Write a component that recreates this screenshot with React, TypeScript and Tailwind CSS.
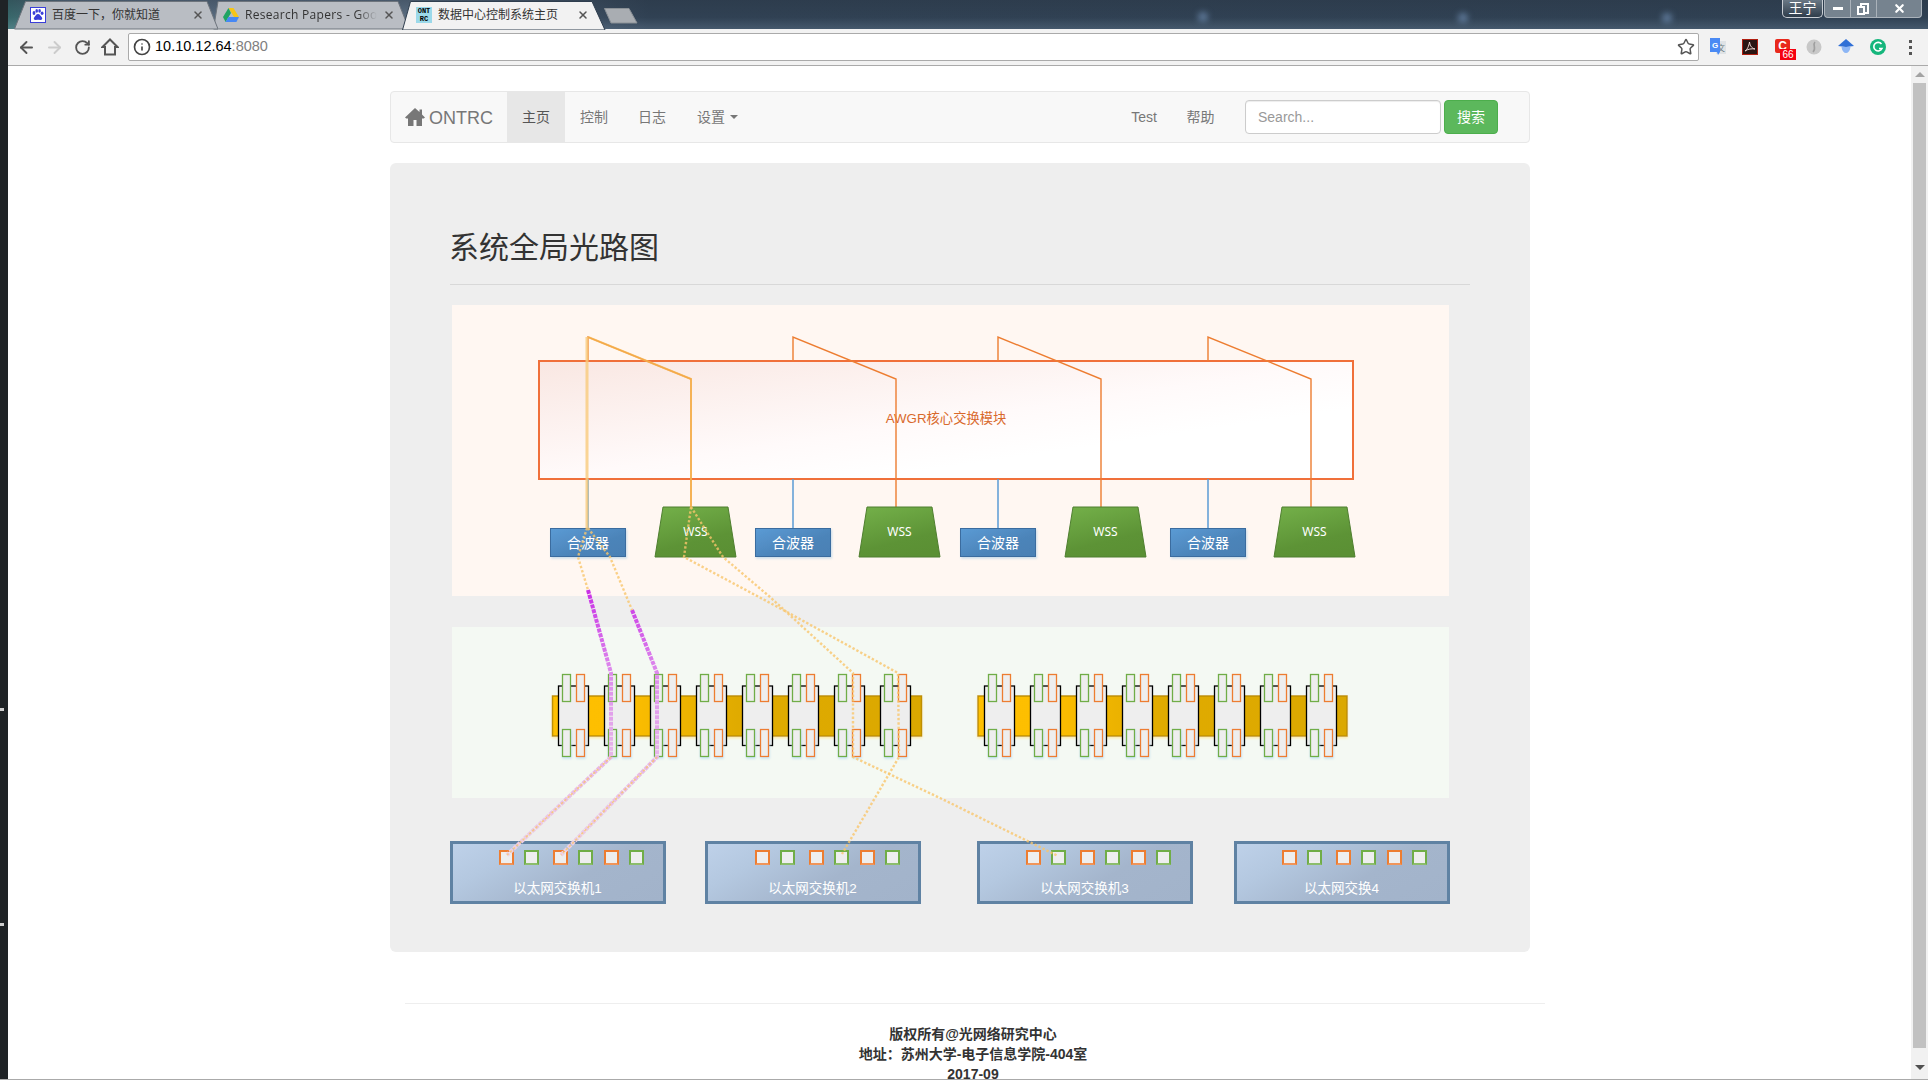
import React from "react";
import { ArrowLeft, ArrowRight, RotateCw, Info, Star, X } from "lucide-react";

const groups = [
  { c: 550, w: 655, top: 588, right: 691 },
  { c: 755, w: 859, top: 793, right: 896 },
  { c: 960, w: 1065, top: 998, right: 1101 },
  { c: 1170, w: 1274, top: 1208, right: 1311 },
];

function Tab({ w, points, fill, stroke, className, children }: { w: number; points: string; fill: string; stroke: string; className: string; children: React.ReactNode }) {
  return (
    <div className={`relative h-[28px] shrink-0 flex items-center ${className}`}>
      <svg className="absolute left-0 top-0" width={w} height={29}>
        <polygon points={points} fill={fill} stroke={stroke} strokeWidth="1" />
      </svg>
      {children}
    </div>
  );
}

function BaiduIcon() {
  return (
    <svg width="16" height="16" viewBox="0 0 16 16" className="shrink-0">
      <rect x="0.5" y="0.5" width="15" height="15" fill="#fff" stroke="#3a3fd8" />
      <g fill="#3a3fd8">
        <ellipse cx="4" cy="6" rx="1.4" ry="1.9" />
        <ellipse cx="6.7" cy="3.9" rx="1.3" ry="1.8" />
        <ellipse cx="9.6" cy="3.9" rx="1.3" ry="1.8" />
        <ellipse cx="12.1" cy="6.2" rx="1.4" ry="1.8" />
        <path d="M8 7 C6 7 5.6 9 4.5 10 C3 11.5 4 13.4 6 13 C7.3 12.8 8.8 12.8 10 13 C12 13.4 13 11.5 11.6 10 C10.4 9 10 7 8 7Z" />
      </g>
    </svg>
  );
}

function DriveIcon() {
  return (
    <svg width="16" height="16" viewBox="0 0 16 16" className="shrink-0">
      <polygon points="5.5,1 10.5,1 16,10 11,10" fill="#f5c518" />
      <polygon points="5.5,1 0,10 2.6,15 8,6" fill="#1fa463" />
      <polygon points="2.6,15 13.4,15 16,10 5.4,10" fill="#4688f4" />
    </svg>
  );
}

function OntIcon() {
  return (
    <div className="w-[16px] h-[16px] shrink-0 bg-[#9bd9ea] flex flex-col items-center justify-center text-black [font-family:'Liberation_Mono',monospace] text-[7px] leading-[8px] font-bold">
      <span>ONT</span>
      <span>RC</span>
    </div>
  );
}

function Port({ color, className }: { color: "o" | "g"; className?: string }) {
  return (
    <div className={`w-[15px] h-[15px] bg-[#eeeeee] border-2 ${color === "o" ? "border-[#ed7d31] border-b-[#f0955a]" : "border-[#70ad47] border-b-[#8cbd6c]"} ${className ?? ""}`} />
  );
}

function Switch({ label, className, pad }: { label: string; className: string; pad: string }) {
  return (
    <div className={`w-[216px] h-[63px] shrink-0 border-[3px] border-[#5f82a3] bg-[linear-gradient(150deg,#bed1e9_0%,#b4c8e0_25%,#a4b5cc_60%,#a2b3ca_100%)] flex flex-col ${className}`}>
      <div className={`flex pt-[6px] ${pad}`}>
        <Port color="o" />
        <Port color="g" className="ml-[10px]" />
        <Port color="o" className="ml-[14px]" />
        <Port color="g" className="ml-[10px]" />
        <Port color="o" className="ml-[11px]" />
        <Port color="g" className="ml-[10px]" />
      </div>
      <div className="mt-[14px] text-center text-white text-[13.5px] leading-[20px] pr-[1px]">{label}</div>
    </div>
  );
}

function PeachDrawing() {
  return (
    <svg width="997" height="291" viewBox="452 305 997 291" className="block">
      <defs>
        <linearGradient id="awgr" x1="0" y1="0" x2="1" y2="1">
          <stop offset="0" stopColor="#f9e7e2" />
          <stop offset="0.5" stopColor="#fffafa" />
          <stop offset="0.7" stopColor="#ffffff" />
        </linearGradient>
        <linearGradient id="comb" x1="0" y1="0" x2="1" y2="1">
          <stop offset="0" stopColor="#5b9bd5" />
          <stop offset="0.6" stopColor="#4c84b9" />
          <stop offset="1" stopColor="#4a80b4" />
        </linearGradient>
        <linearGradient id="wss" x1="0.2" y1="0" x2="0.6" y2="1">
          <stop offset="0" stopColor="#72ae48" />
          <stop offset="0.7" stopColor="#5d9336" />
          <stop offset="1" stopColor="#5b9034" />
        </linearGradient>
        <filter id="soft" x="-10%" y="-10%" width="120%" height="130%">
          <feDropShadow dx="1" dy="1.5" stdDeviation="1.2" floodColor="#b9d3e6" floodOpacity="0.8" />
        </filter>
      </defs>
      <rect x="539" y="361" width="814" height="118" fill="url(#awgr)" stroke="#f0703a" strokeWidth="2" />
      <text x="946" y="423" textAnchor="middle" fontSize="13.3" fill="#d9692c">AWGR核心交换模块</text>
      {groups.map((g) => (
        <g key={g.c}>
          <line x1={g.top} y1="479" x2={g.top} y2="528" stroke="#5b9bd5" strokeWidth="1.5" />
          <path d={`M${g.top} 361 V337 L${g.right} 379 V507`} fill="none" stroke="#ed7d31" strokeWidth="1.4" />
          <rect x={g.c + 0.5} y="528.5" width="75" height="28" fill="url(#comb)" stroke="#3b6c9f" strokeWidth="1" filter="url(#soft)" />
          <text x={g.c + 38} y="548" textAnchor="middle" fontSize="14" fill="#ffffff">合波器</text>
          <polygon points={`${g.w},557 ${g.w + 8},507 ${g.w + 73},507 ${g.w + 81},557`} fill="url(#wss)" stroke="#4f7f30" strokeWidth="1" />
          <text x={g.w + 40.5} y="536" textAnchor="middle" fontSize="12" fill="#ffffff" className="[font-family:'Noto_Sans',sans-serif]">WSS</text>
        </g>
      ))}
    </svg>
  );
}

function Bank({ barX, barW, modX, gradId }: { barX: number; barW: number; modX: number; gradId: string }) {
  const mods = [0, 1, 2, 3, 4, 5, 6, 7];
  return (
    <g>
      <rect x={barX} y="696" width={barW} height="40" fill={`url(#${gradId})`} stroke="#bf9000" strokeWidth="1.5" filter="url(#glow)" />
      {mods.map((i) => {
        const x = modX + i * 46;
        return (
          <g key={i}>
            <rect x={x} y="686" width="30" height="59.5" fill="#eeeeee" stroke="#000000" strokeWidth="1.3" />
            <rect x={x + 4} y="674.5" width="8" height="27" fill="#eeeeee" stroke="#70ad47" strokeWidth="1.3" />
            <rect x={x + 18} y="674.5" width="8" height="27" fill="#eeeeee" stroke="#ed7d31" strokeWidth="1.3" />
            <rect x={x + 4} y="729.5" width="8" height="27" fill="#eeeeee" stroke="#70ad47" strokeWidth="1.3" filter="url(#blue)" />
            <rect x={x + 18} y="729.5" width="8" height="27" fill="#eeeeee" stroke="#ed7d31" strokeWidth="1.3" filter="url(#blue)" />
          </g>
        );
      })}
    </g>
  );
}

function GreenDrawing() {
  return (
    <svg width="997" height="171" viewBox="452 627 997 171" className="block">
      <defs>
        <linearGradient id="bar1" x1="0" y1="0" x2="1" y2="0">
          <stop offset="0" stopColor="#ffc000" />
          <stop offset="0.2" stopColor="#fdbe00" />
          <stop offset="0.5" stopColor="#e0ab00" />
          <stop offset="1" stopColor="#dba800" />
        </linearGradient>
        <filter id="glow" x="-2%" y="-10%" width="104%" height="130%">
          <feDropShadow dx="0" dy="1.5" stdDeviation="1.2" floodColor="#ffe9a0" floodOpacity="0.9" />
        </filter>
        <filter id="blue" x="-40%" y="-10%" width="180%" height="125%">
          <feDropShadow dx="0.5" dy="1.5" stdDeviation="1" floodColor="#bcdff0" floodOpacity="0.9" />
        </filter>
      </defs>
      <Bank barX={552.5} barW={369} modX={558.5} gradId="bar1" />
      <Bank barX={978} barW={369} modX={984.5} gradId="bar1" />
    </svg>
  );
}

function Fibres() {
  const dots = { fill: "none", stroke: "#f9c66c", strokeWidth: 2.4, strokeDasharray: "2.4 2", strokeOpacity: 0.8 };
  return (
    <svg width="1000" height="600" viewBox="450 305 1000 600" className="absolute left-0 top-0 pointer-events-none">
      <defs>
        <linearGradient id="mag" gradientUnits="userSpaceOnUse" x1="0" y1="590" x2="0" y2="860">
          <stop offset="0" stopColor="#c92fe6" />
          <stop offset="0.3" stopColor="#dd8aec" />
          <stop offset="0.6" stopColor="#e6b4ea" />
          <stop offset="1" stopColor="#eed2e4" />
        </linearGradient>
      </defs>
      <path d="M587 337 V528" fill="none" stroke="#f9cb7c" strokeWidth="3" strokeOpacity="0.8" />
      <path d="M588 337 L691 379 V507" fill="none" stroke="#f6b850" strokeWidth="2" strokeOpacity="0.75" />
      <path d="M588 590 L611 673 V757 L507 855" fill="none" stroke="url(#mag)" strokeWidth="4" strokeDasharray="4 1" />
      <path d="M632 610 L657 673 V757 L561 855" fill="none" stroke="url(#mag)" strokeWidth="4" strokeDasharray="4 1" />
      <path d="M587 528 L578 557 L588 590" {...dots} />
      <path d="M588 528 L610 557 L632 610" {...dots} />
      <path d="M611 757 L507 855" {...dots} strokeWidth={1.6} />
      <path d="M657 757 L561 855" {...dots} strokeWidth={1.6} />
      <path d="M691 507 L684 557 L787 612 L898 673 L899 757 L862 820 L842 854" {...dots} />
      <path d="M691 507 L723 557 L770 597 L853 673 L853 757 L940 798 L1058 856" {...dots} />
    </svg>
  );
}

function ExtensionIcons() {
  return (
    <div className="flex items-center ml-[3px]">
      <div className="w-[32px] flex justify-center">
        <svg width="16" height="18" viewBox="0 0 16 18">
          <rect x="6" y="3" width="10" height="13" fill="#dfe3e6" />
          <text x="11" y="13" textAnchor="middle" fontSize="8" fill="#6b7a80">文</text>
          <polygon points="0,0 10,0 10,14 8,17 7,14 0,14" fill="#4a8af4" />
          <text x="5" y="10" textAnchor="middle" fontSize="8" fontWeight="700" fill="#ffffff">G</text>
        </svg>
      </div>
      <div className="w-[32px] flex justify-center">
        <svg width="16" height="16" viewBox="0 0 16 16">
          <rect x="0.5" y="0.5" width="15" height="15" fill="#2a1512" stroke="#b01e10" />
          <path d="M3 12 C5 11 7 7 7.5 3 C8 6 9 9 13 10 C9.5 9.5 6 10 3 12Z" fill="none" stroke="#f0d9d5" strokeWidth="1" />
        </svg>
      </div>
      <div className="w-[32px] flex justify-center">
        <div className="relative w-[16px] h-[16px] ml-[2px]">
          <div className="w-[15px] h-[14px] rounded-[2px] bg-[#e8291c] flex items-center justify-center text-white text-[12px] leading-none font-bold">C</div>
          <div className="absolute left-[5px] top-[10px] w-[16px] h-[11px] bg-[#f5000f] text-white text-[10px] leading-[11px] text-center">66</div>
        </div>
      </div>
      <div className="w-[32px] flex justify-center">
        <svg width="16" height="16" viewBox="0 0 16 16">
          <circle cx="8" cy="8" r="7.5" fill="#c8c8c8" />
          <path d="M9 3 C6 6 11 9 7 13" fill="none" stroke="#9f9f9f" strokeWidth="1.6" />
        </svg>
      </div>
      <div className="w-[32px] flex justify-center">
        <svg width="16" height="16" viewBox="0 0 16 16">
          <polygon points="8,0 16,7 8,8 0,7" fill="#2f6fd6" />
          <path d="M3.5 8 H12.5 C12 12 10 14 8 14 C6 14 4 12 3.5 8Z" fill="#8db6f5" />
        </svg>
      </div>
      <div className="w-[32px] flex justify-center">
        <svg width="16" height="16" viewBox="0 0 16 16">
          <circle cx="8" cy="8" r="8" fill="#15b67c" />
          <path d="M11.5 5 A4.3 4.3 0 1 0 12 9.5 H9" fill="none" stroke="#ffffff" strokeWidth="1.6" />
        </svg>
      </div>
      <div className="w-[32px] flex flex-col items-center gap-[3px]">
        <span className="w-[3px] h-[3px] bg-[#555]" />
        <span className="w-[3px] h-[3px] bg-[#555]" />
        <span className="w-[3px] h-[3px] bg-[#555]" />
      </div>
    </div>
  );
}

function TitleBar() {
  return (
    <div className="relative h-[29px] flex pt-px bg-[linear-gradient(90deg,#3f7e7c_0px,#6b8197_60px,#6f859b_400px,#34475b_640px,#33465a_100%)]">
      <div className="absolute inset-0 bg-[linear-gradient(180deg,rgba(40,52,66,0.55)_0%,rgba(40,52,66,0.3)_60%,rgba(110,130,150,0.3)_100%)]" />
      <span className="absolute left-[1190px] top-[12px] w-[10px] h-[10px] rounded-full bg-[#5f7a9a] blur-[3px]" />
      <span className="absolute left-[1450px] top-[13px] w-[10px] h-[10px] rounded-full bg-[#5f7a9a] blur-[3px]" />
      <span className="absolute left-[1654px] top-[13px] w-[10px] h-[10px] rounded-full bg-[#5f7a9a] blur-[3px]" />
      <div className="relative flex text-[12px] text-[#333] ml-[6px]">
        <Tab w={204} points="0.5,28 11.5,0.5 193,0.5 204,28" fill="#b9bdc3" stroke="#6d747c" className="w-[204px] z-10">
          <div className="relative flex items-center pl-[16px]">
            <BaiduIcon />
            <span className="ml-[6px] w-[140px]">百度一下，你就知道</span>
            <X size={12} strokeWidth={3} className="text-[#555]" />
          </div>
        </Tab>
        <Tab w={196} points="0.5,28 5,0.5 185,0.5 196,28" fill="#b9bdc3" stroke="#6d747c" className="w-[196px] -ml-[5px]">
          <div className="relative flex items-center pl-[10px]">
            <DriveIcon />
            <span className="ml-[6px] w-[132px] overflow-hidden whitespace-nowrap text-[12px] tracking-[0.3px] [font-family:'Open_Sans',sans-serif] [mask-image:linear-gradient(90deg,#000_85%,transparent_100%)]">Research Papers - Google Drive</span>
            <X size={12} strokeWidth={3} className="ml-[6px] text-[#555]" />
          </div>
        </Tab>
        <Tab w={204} points="0.5,29 8.5,0.5 190,0.5 203,29 203,29" fill="#f2f2f2" stroke="#2f3e4e" className="w-[204px] -ml-[7px] z-20">
          <div className="relative flex items-center pl-[14px]">
            <OntIcon />
            <span className="ml-[6px] w-[139px] whitespace-nowrap">数据中心控制系统主页</span>
            <X size={12} strokeWidth={3} className="text-[#555]" />
          </div>
        </Tab>
        <svg width="34" height="16" className="-ml-[2px] mt-[7px] z-10">
          <polygon points="0.5,0.5 25,0.5 33,15 7,15" fill="#a9adb2" stroke="#8a9096" />
        </svg>
      </div>
      <div className="relative ml-auto mr-[6px] flex h-[18px] -mt-px">
        <div className="w-[41px] rounded-b-[5px] border border-t-0 border-[#c9ced4] bg-[linear-gradient(180deg,#6a7885,#2f3d4b)] text-white text-[14px] leading-[17px] text-center">王宁</div>
        <div className="ml-px w-[26px] rounded-bl-[4px] border-b border-l border-[#aab2ba] bg-[#76838f] flex items-center justify-center">
          <span className="w-[10px] h-[3px] bg-white" />
        </div>
        <div className="relative w-[27px] border-b border-x border-[#aab2ba] bg-[#76838f]">
          <span className="absolute left-[9px] top-[3px] w-[9px] h-[11px] border-2 border-white" />
          <span className="absolute left-[6px] top-[6px] w-[8px] h-[9px] border-2 border-white bg-[#76838f]" />
        </div>
        <div className="w-[45px] rounded-br-[4px] border-b border-r border-[#aab2ba] bg-[#76838f] flex items-center justify-center">
          <X size={13} strokeWidth={4} className="text-white" />
        </div>
      </div>
    </div>
  );
}

function Toolbar() {
  return (
    <div className="h-[37px] flex items-center bg-[#f2f2f2] border-b border-[#aaaaaa] pl-[4px]">
      <div className="w-[28px] flex justify-center"><ArrowLeft size={19} strokeWidth={2.4} className="text-[#555]" /></div>
      <div className="w-[28px] flex justify-center"><ArrowRight size={19} strokeWidth={2.4} className="text-[#ccc]" /></div>
      <div className="w-[28px] flex justify-center"><RotateCw size={17} strokeWidth={2.6} className="text-[#555]" /></div>
      <div className="w-[28px] flex justify-center">
        <svg width="18" height="18" viewBox="0 0 18 18"><path d="M9 1.5 L16.5 9 H14 V16.5 H4 V9 H1.5 Z" fill="none" stroke="#555" strokeWidth="2" strokeLinejoin="miter" /></svg>
      </div>
      <div className="ml-[4px] w-[1571px] h-[28px] bg-white border border-[#aaaaaa] rounded-[2px] flex items-center pl-[4px] pr-[3px]">
        <Info size={18} strokeWidth={2.2} className="text-[#444]" />
        <span className="ml-[4px] text-[14.5px] text-black">10.10.12.64<span className="text-[#808080]">:8080</span></span>
        <Star size={18} strokeWidth={2} className="ml-auto text-[#555]" />
      </div>
      <ExtensionIcons />
    </div>
  );
}

function Navbar() {
  return (
    <nav className="w-[1140px] h-[52px] bg-[#f8f8f8] border border-[#e7e7e7] rounded-[4px] flex items-stretch text-[14px] text-[#777]">
      <div className="w-[116px] flex items-center pl-[14px]">
        <svg width="20" height="18" viewBox="0 0 20 18" className="-mt-[1px]">
          <path d="M10 0 L14.5 4 V1.5 H17 V6.6 L20 9.4 L18.7 10.6 H17 V18 H11.5 V12 H8.5 V18 H3 V10.6 H1.3 L0 9.4 Z" fill="#777" />
        </svg>
        <span className="ml-[4px] mt-[3px] text-[18px]">ONTRC</span>
      </div>
      <div className="w-[58px] bg-[#e7e7e7] text-[#555] flex items-center justify-center">主页</div>
      <div className="w-[58px] flex items-center justify-center">控制</div>
      <div className="w-[58px] flex items-center justify-center">日志</div>
      <div className="pl-[16px] flex items-center">
        设置
        <span className="ml-[5px] w-0 h-0 border-t-[4px] border-x-[4px] border-t-[#777] border-x-transparent" />
      </div>
      <div className="ml-auto w-[56px] flex items-center justify-center">Test</div>
      <div className="w-[57px] flex items-center justify-center">帮助</div>
      <div className="ml-[16px] mr-[31px] flex items-center gap-[3px]">
        <input
          readOnly
          placeholder="Search..."
          className="w-[196px] h-[34px] px-[12px] bg-white border border-[#ccc] rounded-[4px] text-[14px] placeholder:text-[#999] shadow-[inset_0_1px_1px_rgba(0,0,0,0.075)] outline-none"
        />
        <div className="w-[54px] h-[34px] rounded-[4px] bg-[#5cb85c] border border-[#4cae4c] text-white flex items-center justify-center">搜索</div>
      </div>
    </nav>
  );
}

function Scrollbar() {
  return (
    <aside className="w-[17px] shrink-0 bg-[#f1f1f1] flex flex-col items-center pt-[6px]">
      <span className="w-0 h-0 border-b-[5px] border-x-[5px] border-b-[#a3a3a3] border-x-transparent" />
      <div className="mt-[6px] w-[13px] h-[965px] bg-[#c1c1c1]" />
      <span className="mt-[17px] w-0 h-0 border-t-[5px] border-x-[5px] border-t-[#505050] border-x-transparent" />
    </aside>
  );
}

export default function App() {
  return (
    <div className="w-[1928px] h-[1080px] overflow-hidden flex bg-white border-b border-[#aaaaaa] [font-family:'Liberation_Sans','Noto_Sans_CJK_SC',sans-serif]">
      <div className="w-[8px] shrink-0 bg-[#1f2326] flex flex-col pt-[708px]">
        <span className="w-[4px] h-[3px] bg-[#cfcfcf]" />
        <span className="mt-[212px] w-[4px] h-[3px] bg-[#cfcfcf]" />
      </div>
      <div className="flex-1 min-w-0 flex flex-col">
        <TitleBar />
        <Toolbar />
        <div className="flex-1 min-h-0 flex">
          <main className="flex-1 min-w-0 pl-[382px] pt-[25px]">
            <Navbar />
            <section className="mt-[20px] w-[1140px] h-[789px] bg-[#eeeeee] rounded-[6px] pl-[60px] pt-[68px]">
              <h1 className="-ml-[1px] text-[30px] leading-[33px] text-[#333] font-normal">系统全局光路图</h1>
              <div className="mt-[20px] w-[1020px] border-t border-[#d8d8d8]" />
              <div className="relative mt-[20px] w-[1000px]">
                <div className="ml-[2px] w-[997px] h-[291px] bg-[#fff7f2]">
                  <PeachDrawing />
                </div>
                <div className="ml-[2px] mt-[31px] w-[997px] h-[171px] bg-[#f4f9f3]">
                  <GreenDrawing />
                </div>
                <div className="mt-[43px] flex">
                  <Switch label="以太网交换机1" className="" pad="pl-[46px]" />
                  <Switch label="以太网交换机2" className="ml-[39px]" pad="pl-[47px]" />
                  <Switch label="以太网交换机3" className="ml-[56px]" pad="pl-[46px]" />
                  <Switch label="以太网交换4" className="ml-[41px]" pad="pl-[45px]" />
                </div>
                <Fibres />
              </div>
            </section>
            <footer className="mt-[51px] ml-[15px] w-[1140px] border-t border-[#eeeeee] pt-[20px] pr-[4px] text-center text-[14px] leading-[20px] font-bold text-[#333]">
              <p>版权所有@光网络研究中心</p>
              <p>地址：苏州大学-电子信息学院-404室</p>
              <p>2017-09</p>
            </footer>
          </main>
          <Scrollbar />
        </div>
      </div>
    </div>
  );
}
